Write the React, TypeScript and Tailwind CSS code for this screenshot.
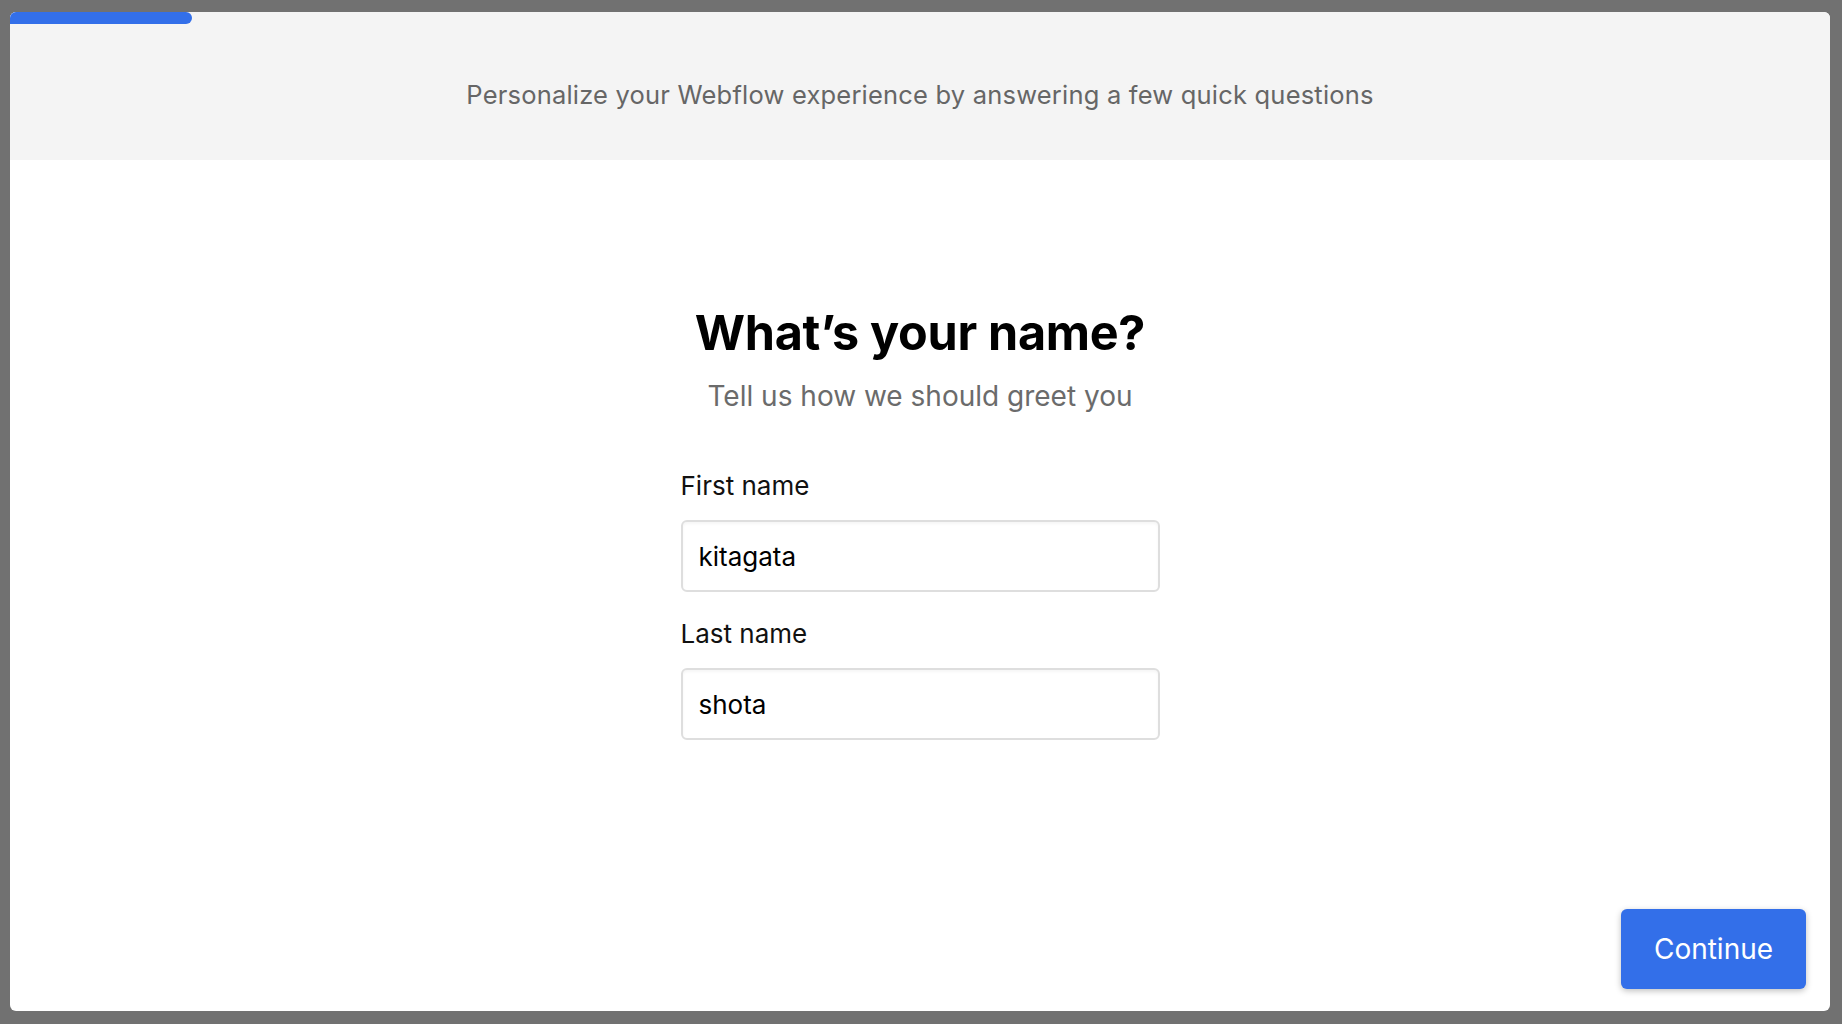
import React from "react";

export default function App() {
  return (
    <div
      className="h-screen w-full bg-[#717171] pt-[12px] pl-[10px] pr-[12px] pb-[13px]"
      style={{ fontFamily: "Inter, 'Noto Sans', sans-serif" }}
    >
      <div className="flex h-full flex-col overflow-hidden rounded-[6px] bg-white">
        <div className="flex h-[148px] flex-col bg-[#f4f4f4]">
          <div className="h-[12px] w-[182px] rounded-r-full bg-[#336fe9]" />
          <div className="flex flex-1 items-center justify-center pt-[6px]">
            <p className="text-[25.5px] tracking-[0.2px] text-[#666666]">
              Personalize your Webflow experience by answering a few quick questions
            </p>
          </div>
        </div>
        <div className="flex flex-1 flex-col items-center pt-[144px]">
          <h1 className="text-[48.5px] font-bold leading-[58px] tracking-[-0.3px] text-black">
            What’s your name?
          </h1>
          <p className="mt-[16px] text-[28px] leading-[36px] text-[#6b6b6b]">
            Tell us how we should greet you
          </p>
          <div className="mt-[56px] flex w-[479px] flex-col">
            <label className="text-[26px] leading-[32px] text-[#111]">First name</label>
            <div className="mt-[18px] flex h-[72px] items-center rounded-[6px] border-2 border-[#dedede] px-[16px] shadow-[inset_0_2px_3px_rgba(0,0,0,0.04)]">
              <span className="text-[26px] text-black">kitagata</span>
            </div>
            <label className="mt-[26px] text-[26px] leading-[32px] text-[#111]">Last name</label>
            <div className="mt-[18px] flex h-[72px] items-center rounded-[6px] border-2 border-[#dedede] px-[16px] shadow-[inset_0_2px_3px_rgba(0,0,0,0.04)]">
              <span className="text-[26px] text-black">shota</span>
            </div>
          </div>
        </div>
        <div className="flex justify-end pr-[24px] pb-[22px]">
          <button className="flex h-[80px] w-[185px] items-center justify-center rounded-[6px] bg-[#336fe9] text-[28px] text-white shadow-[0_2px_6px_rgba(0,0,0,0.25)]">
            Continue
          </button>
        </div>
      </div>
    </div>
  );
}
